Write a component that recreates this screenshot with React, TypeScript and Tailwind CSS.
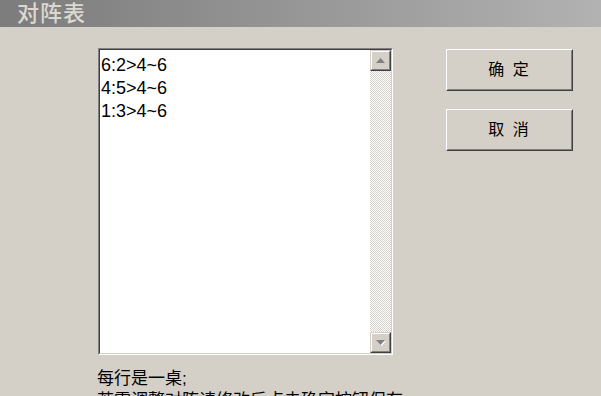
import React from 'react';

const rows = ['6:2>4~6', '4:5>4~6', '1:3>4~6'];

function ArrowButton({ dir }: { dir: 'up' | 'down' }) {
  return (
    <div className="h-[21px] w-full border border-t-[#d4d0c8] border-l-[#d4d0c8] border-b-[#404040] border-r-[#404040] bg-[#d4d0c8]">
      <div className="flex h-full w-full items-center justify-center border border-t-white border-l-white border-b-[#808080] border-r-[#808080]">
        <svg width="11" height="7" viewBox="0 0 11 7">
          {dir === 'up' ? (
            <polygon points="5.5,1 10,6 1,6" fill="#808080" />
          ) : (
            <>
              <polygon points="2,2 11,2 6.5,7" fill="#ffffff" />
              <polygon points="1,1 10,1 5.5,6" fill="#808080" />
            </>
          )}
        </svg>
      </div>
    </div>
  );
}

function WinButton({ label }: { label: string }) {
  return (
    <button className="h-[42px] w-[127px] border border-t-white border-l-white border-b-[#404040] border-r-[#404040] bg-[#d4d0c8]">
      <div className="flex h-full w-full items-center justify-center border border-t-[#d4d0c8] border-l-[#d4d0c8] border-b-[#808080] border-r-[#808080] text-[16px] text-black tracking-[2px]">
        {label}
      </div>
    </button>
  );
}

export default function App() {
  return (
    <div
      className="relative h-[396px] w-[601px] overflow-hidden bg-[#d4d0c8]"
      style={{ fontFamily: '"Liberation Sans", "Noto Sans CJK SC", sans-serif' }}
    >
      <div className="flex h-[27px] items-center bg-gradient-to-r from-[#7c7c7c] to-[#b2b2b2] pl-[17px]">
        <span className="text-[22px] font-medium leading-none text-[#dcd8d0] tracking-[1px]">对阵表</span>
      </div>

      <div className="flex pl-[98px] pt-[21px]">
        <div className="h-[307px] w-[295px] border border-t-[#808080] border-l-[#808080] border-b-white border-r-white">
          <div className="flex h-full w-full border border-t-[#404040] border-l-[#404040] border-b-[#d4d0c8] border-r-[#d4d0c8] bg-white">
            <div className="flex-1 pl-[1px] pt-[4px] text-[18px] leading-[23px] text-black">
              {rows.map((r) => (
                <div key={r}>{r}</div>
              ))}
            </div>
            <div className="flex w-[21px] flex-col">
              <ArrowButton dir="up" />
              <div className="flex-1 bg-[repeating-conic-gradient(#d4d0c8_0_25%,#ffffff_0_50%)] bg-[length:2px_2px]" />
              <ArrowButton dir="down" />
            </div>
          </div>
        </div>

        <div className="ml-[53px] mt-px flex flex-col gap-[18px]">
          <WinButton label="确 定" />
          <WinButton label="取 消" />
        </div>
      </div>

      <div className="pl-[97px] pt-[13px] text-[17px] leading-[22px] text-black">
        <div>每行是一桌;</div>
        <div>若需调整对阵请修改后点击确定按钮保存</div>
      </div>
    </div>
  );
}
